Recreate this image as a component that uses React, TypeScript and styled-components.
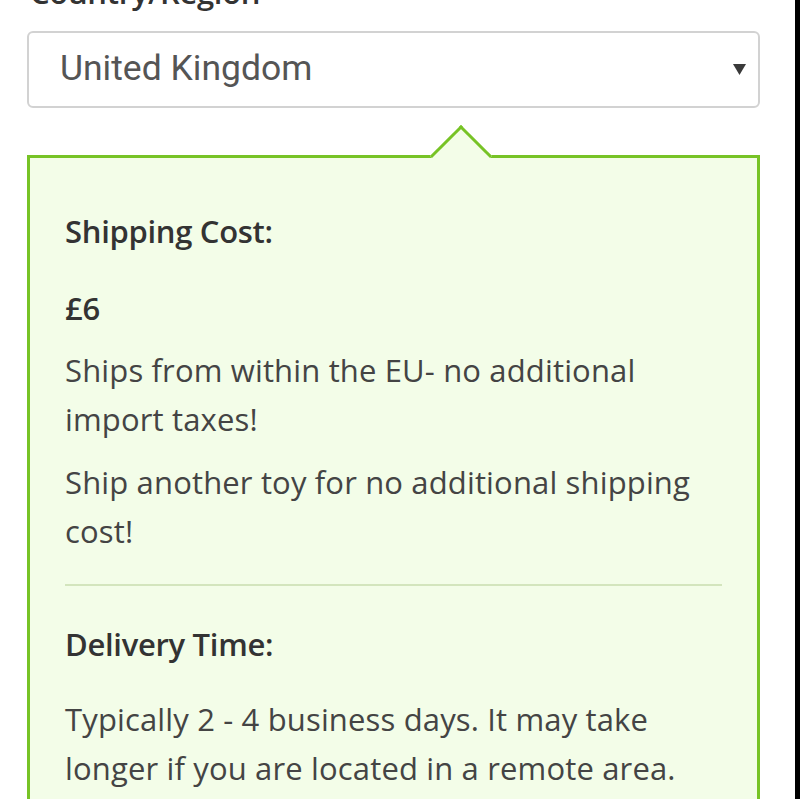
import React from "react";
import styled, { createGlobalStyle } from "styled-components";

const GlobalStyle = createGlobalStyle`
  html, body {
    margin: 0;
    padding: 0;
    background: #ffffff;
    overflow: hidden;
  }
  * { box-sizing: border-box; }
`;

const Page = styled.div`
  width: 800px;
  height: 799px;
  overflow: hidden;
  background: #ffffff;
  border-right: 5px solid #000000;
  font-family: "Open Sans", "Liberation Sans", sans-serif;
  color: #444444;
`;

const Content = styled.div`
  display: flex;
  flex-direction: column;
  padding: 0 35px 0 27px;
  margin-top: -32px;
`;

const FieldLabel = styled.div`
  font-size: 31px;
  font-weight: 600;
  line-height: 48px;
  letter-spacing: -0.3px;
  color: #333333;
  padding-left: 3px;
`;

const SelectBox = styled.div`
  margin-top: 15px;
  height: 77px;
  border: 2px solid #d2d2d2;
  border-radius: 6px;
  background: #ffffff;
  display: flex;
  align-items: center;
  justify-content: space-between;
  padding: 0 12px 0 31px;
`;

const SelectValue = styled.span`
  font-family: Roboto, "Liberation Sans", sans-serif;
  font-size: 35.5px;
  color: #555555;
  line-height: 1;
  padding-bottom: 2px;
`;

const Caret = styled.svg`
  width: 13px;
  height: 11px;
  display: block;
`;

const InfoBox = styled.div`
  position: relative;
  margin-top: 47px;
  border: 3px solid #77c326;
  background: #f3fde8;
  padding: 49px 35px 40px 35px;

  &::before {
    content: "";
    position: absolute;
    top: -24px;
    left: 409px;
    width: 41px;
    height: 41px;
    background: #f3fde8;
    border-top: 3px solid #77c326;
    border-left: 3px solid #77c326;
    transform: rotate(45deg);
  }
`;

const Heading = styled.h4<{ $gap?: number }>`
  margin: 0 0 ${(p) => p.$gap ?? 29}px 0;
  font-size: 31px;
  font-weight: 600;
  line-height: 48px;
  letter-spacing: -0.3px;
  color: #333333;
`;

const Text = styled.p`
  margin: 0 0 14px 0;
  font-size: 31px;
  font-weight: 400;
  line-height: 49px;
  letter-spacing: 0.15px;
  color: #444444;
`;

const Divider = styled.hr`
  border: none;
  height: 2px;
  background: #d3e5bd;
  margin: 28px 0 34px 0;
`;

export default function App() {
  return (
    <Page>
      <GlobalStyle />
      <Content>
        <FieldLabel>Country/Region</FieldLabel>
        <SelectBox>
          <SelectValue>United Kingdom</SelectValue>
          <Caret viewBox="0 0 13 11">
            <polygon points="0,0 13,0 6.5,11" fill="#3a3a3a" />
          </Caret>
        </SelectBox>
        <InfoBox>
          <Heading>Shipping Cost:</Heading>
          <Heading as="div" $gap={14}>£6</Heading>
          <Text>Ships from within the EU- no additional import taxes!</Text>
          <Text>Ship another toy for no additional shipping cost!</Text>
          <Divider />
          <Heading $gap={27}>Delivery Time:</Heading>
          <Text>
            Typically 2 - 4 business days. It may take longer if you are located in a remote area.
          </Text>
        </InfoBox>
      </Content>
    </Page>
  );
}
